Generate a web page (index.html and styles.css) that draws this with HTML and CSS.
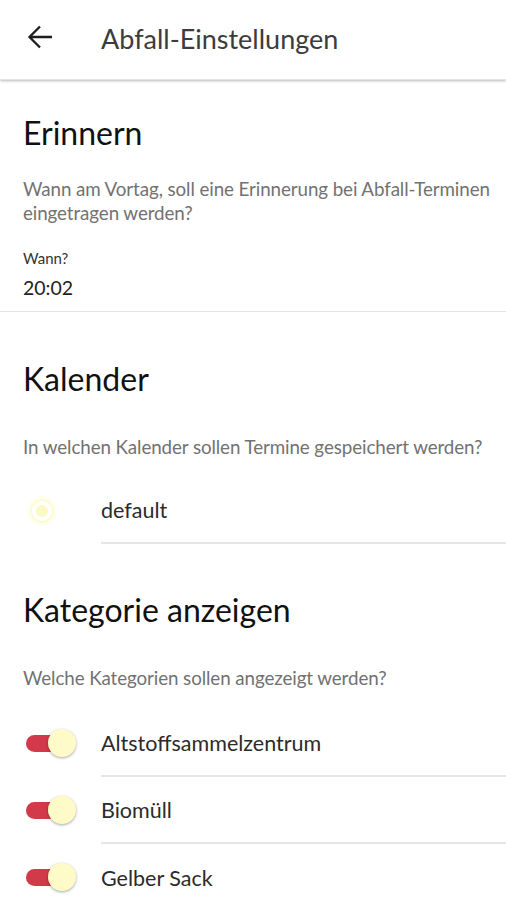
FILE: index.html
```html
<!DOCTYPE html>
<html lang="de">
<head>
<meta charset="utf-8">
<link rel="stylesheet" href="styles.css">
</head>
<body>
<header class="appbar">
  <svg class="back" width="26" height="26" viewBox="0 0 26 26"><path d="M25 13H2.5M13 2.5L2.5 13L13 23.5" fill="none" stroke="#1e1e1e" stroke-width="2.3"/></svg>
  <h1 class="title">Abfall-Einstellungen</h1>
</header>
<main>
  <section class="section s1">
    <h2 class="heading">Erinnern</h2>
    <p class="desc">Wann am Vortag, soll eine Erinnerung bei Abfall-Terminen eingetragen werden?</p>
    <div class="label">Wann?</div>
    <div class="value">20:02</div>
  </section>
  <section class="section s2">
    <h2 class="heading">Kalender</h2>
    <p class="desc">In welchen Kalender sollen Termine gespeichert werden?</p>
    <div class="row">
      <div class="ctl"><span class="radio"><span class="dot"></span></span></div>
      <div class="text">default</div>
    </div>
  </section>
  <section class="section s3">
    <h2 class="heading">Kategorie anzeigen</h2>
    <p class="desc">Welche Kategorien sollen angezeigt werden?</p>
    <div class="row">
      <div class="ctl"><span class="toggle"><span class="thumb"></span></span></div>
      <div class="text">Altstoffsammelzentrum</div>
    </div>
    <div class="row">
      <div class="ctl"><span class="toggle"><span class="thumb"></span></span></div>
      <div class="text">Biomüll</div>
    </div>
    <div class="row">
      <div class="ctl"><span class="toggle"><span class="thumb"></span></span></div>
      <div class="text last">Gelber Sack</div>
    </div>
  </section>
</main>
</body>
</html>
```
FILE: styles.css
```css
* { box-sizing: border-box; }
html, body { margin: 0; padding: 0; background: #fff; }
body {
  font-family: Lato, "Open Sans", sans-serif;
  color: #212121;
  width: 506px;
  height: 900px;
  overflow: hidden;
}
.appbar {
  height: 80px;
  display: flex;
  align-items: center;
  padding-left: 27px;
  padding-bottom: 2px;
  box-shadow: 0 1px 2px rgba(0,0,0,0.2), 0 2px 3px rgba(0,0,0,0.06);
  position: relative;
  z-index: 1;
  border-bottom: 1px solid #e2e2e2;
}
.back { width: 26px; height: 26px; margin-right: 48px; margin-top: -3px; }
.title {
  margin: 0;
  font-weight: 400;
  font-size: 27px;
  color: #3c3c3c;
}
.section { padding-left: 23px; }
.heading {
  margin: 0;
  font-weight: 400;
  font-size: 32px;
  line-height: 40px;
  color: #111;
}
.desc {
  margin: 0;
  font-size: 18.8px;
  line-height: 24px;
  color: #727272;
  letter-spacing: -0.1px;
}
.s1 { padding-top: 33px; padding-bottom: 10px; border-bottom: 1px solid #e2e2e2; }
.s1 .desc { margin-top: 24px; }
.label { margin-top: 23px; font-size: 15px; line-height: 20px; color: #333; }
.value { margin-top: 7px; font-size: 19.5px; line-height: 26px; color: #222; }
.s2 { padding-top: 47px; }
.s2 .desc { margin-top: 36px; }
.s2 .row { margin-top: 19px; height: 66px; }
.s3 { padding-top: 46px; }
.s3 .desc { margin-top: 36px; }
.s3 .row:first-of-type { margin-top: 20px; }
.row {
  display: flex;
  height: 67px;
  margin-left: -23px;
}
.ctl {
  width: 101px;
  flex: none;
  display: flex;
  align-items: center;
  padding-left: 26px;
}
.text {
  flex: 1;
  display: flex;
  align-items: center;
  font-size: 21.5px;
  color: #2b2b2b;
  border-bottom: 2px solid #e6e6e6;
}
.text.last { border-bottom: none; }
.radio {
  margin-left: 4px;
  width: 24px; height: 24px;
  border-radius: 50%;
  border: 2px solid #fdfbd0;
  display: flex; align-items: center; justify-content: center;
  box-shadow: 0 0 0 3px #fffef0;
}
.dot { width: 12px; height: 12px; border-radius: 50%; background: #fbf9c4; }
.toggle {
  position: relative;
  width: 26px;
  height: 17px;
  border-radius: 9px 0 0 9px;
  background: #d33a49;
}
.thumb {
  position: absolute;
  left: 22px;
  top: -6px;
  width: 28px;
  height: 28px;
  border-radius: 50%;
  background: #fffbc8;
  box-shadow: 0 1px 3px rgba(0,0,0,0.35);
}
```
